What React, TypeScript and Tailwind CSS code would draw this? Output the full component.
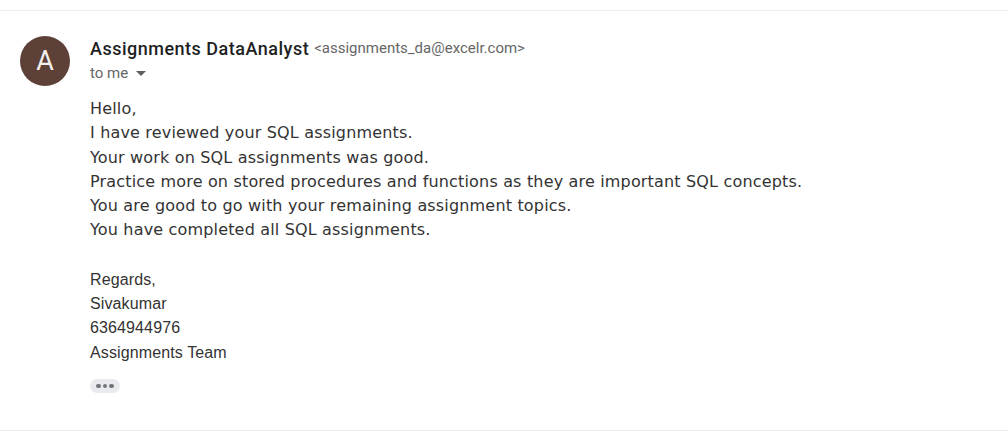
const bodyLines = [
  "Hello,",
  "I have reviewed your SQL assignments.",
  "Your work on SQL assignments was good.",
  "Practice more on stored procedures and functions as they are important SQL concepts.",
  "You are good to go with your remaining assignment topics.",
  "You have completed all SQL assignments.",
];

const signature = ["Regards,", "Sivakumar", "6364944976", "Assignments Team"];

export default function App() {
  return (
    <div className="h-[447px] w-[1008px] overflow-hidden bg-white pt-[10px]">
      <div className="h-[421px] border-y border-[#eeeeee] pl-5 pt-[25px]">
        <div className="flex gap-5">
          <div className="flex size-[50px] shrink-0 items-center justify-center rounded-full bg-[#5d4037] font-['Roboto',sans-serif] text-[27px] font-[450] text-[#f5f0ee]">
            A
          </div>
          <div className="min-w-0 flex-1">
            <div className="flex h-6 items-center gap-[5px] font-['Roboto',sans-serif]">
              <span className="text-[18px] font-medium tracking-[0.5px] text-[#1f1f1f]">Assignments DataAnalyst</span>
              <span className="text-[15px] text-[#666666]">&lt;assignments_da@excelr.com&gt;</span>
            </div>
            <div className="mt-[1px] flex h-6 items-center gap-[6px] font-['Roboto',sans-serif] text-[15px] text-[#666666]">
              <span>to me</span>
              <span className="ml-[2px] mt-[1px] h-0 w-0 border-x-[5px] border-t-[5px] border-x-transparent border-t-[#5e5e5e]" />
            </div>
            <div className="mt-[12px] font-['DejaVu_Sans',sans-serif] text-[16px] leading-[24.3px] tracking-[0.17px] text-[#333333]">
              {bodyLines.map((line) => (
                <div key={line}>{line}</div>
              ))}
            </div>
            <div className="mt-[25px] font-['Liberation_Sans',sans-serif] text-[16px] leading-[24.3px] tracking-[0.12px] text-[#333333]">
              {signature.map((line) => (
                <div key={line}>{line}</div>
              ))}
            </div>
            <div className="mt-[14px] flex h-[14px] w-[30px] items-center justify-center gap-[2px] rounded-full bg-[#e8eaed]">
              <span className="size-[4.5px] rounded-full bg-[#70757a]" />
              <span className="size-[4.5px] rounded-full bg-[#70757a]" />
              <span className="size-[4.5px] rounded-full bg-[#70757a]" />
            </div>
          </div>
        </div>
      </div>
    </div>
  );
}
